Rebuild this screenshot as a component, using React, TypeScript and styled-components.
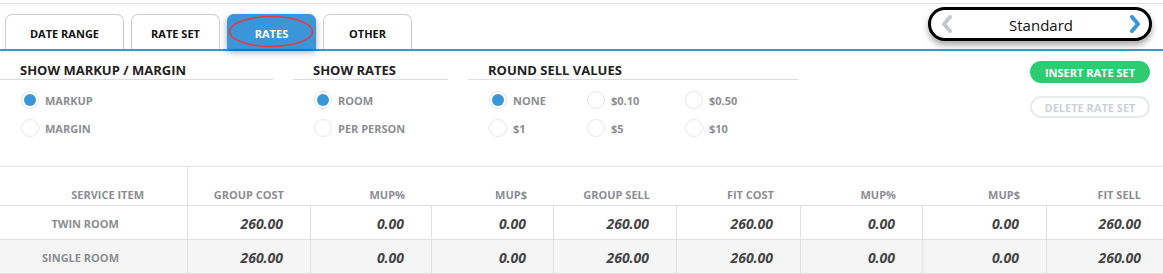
import React from "react";
import styled, { createGlobalStyle } from "styled-components";

const Global = createGlobalStyle`
  html, body { margin: 0; padding: 0; background: #fff; }
  body { font-family: "Open Sans", "Liberation Sans", sans-serif; width: 1163px; overflow: hidden; }
  * { box-sizing: border-box; }
`;

const Page = styled.div`
  width: 1163px;
  padding-top: 3px;
`;

const TopRule = styled.div`
  height: 1px;
  background: #dedee8;
`;

const TabBar = styled.div`
  height: 47px;
  display: flex;
  align-items: flex-end;
  border-bottom: 2px solid #3a96d8;
  padding-left: 5px;
  gap: 7px;
`;

const Tab = styled.div<{ $active?: boolean; $w: number }>`
  position: relative;
  width: ${(p) => p.$w}px;
  height: 35px;
  border: 1px solid ${(p) => (p.$active ? "#3a96d8" : "#cdd0d3")};
  border-bottom: none;
  border-radius: 7px 7px 0 0;
  background: ${(p) => (p.$active ? "#3a96d8" : "#fff")};
  color: ${(p) => (p.$active ? "#fff" : "#111")};
  box-shadow: ${(p) => (p.$active ? "0 3px 7px rgba(0,0,0,0.35)" : "none")};
  z-index: ${(p) => (p.$active ? 1 : 0)};
  font-weight: 700;
  font-size: 11px;
  display: flex;
  align-items: center;
  justify-content: center;
  padding-top: 2px;
`;

const Ellipse = styled.svg`
  position: absolute;
  left: 0px;
  top: 0px;
  pointer-events: none;
`;

const Pill = styled.div`
  margin-left: auto;
  margin-right: 11px;
  align-self: flex-start;
  margin-top: 3px;
  width: 224px;
  height: 34px;
  border: 3px solid #000;
  border-radius: 17px;
  box-shadow: 0 4px 6px rgba(0, 0, 0, 0.35);
  display: flex;
  align-items: center;
  justify-content: space-between;
  padding: 0 7px 0 9px;
  background: #fff;
`;

const PillText = styled.span`
  font-size: 15px;
  color: #111;
  font-weight: 400;
  padding-top: 1px;
`;

const Options = styled.div`
  height: 115px;
  display: flex;
  gap: 20px;
  padding-top: 10px;
  position: relative;
`;

const Section = styled.div<{ $w: number }>`
  width: ${(p) => p.$w}px;
`;

const SectionTitle = styled.div`
  font-size: 13px;
  font-weight: 700;
  color: #222;
  padding-left: 20px;
  height: 18px;
  line-height: 18px;
  border-bottom: 1px solid #dcdce6;
  box-sizing: content-box;
`;

const RadioGrid = styled.div<{ $cols: number }>`
  display: grid;
  grid-template-columns: repeat(${(p) => p.$cols}, 98px);
  row-gap: 10px;
  padding-left: 21px;
  padding-top: 11px;
`;

const RadioItem = styled.div`
  display: flex;
  align-items: center;
  height: 18px;
  gap: 6px;
`;

const Circle = styled.span<{ $on?: boolean }>`
  width: 18px;
  height: 18px;
  border-radius: 50%;
  border: 1px solid #e6e6e6;
  background: #fff;
  display: flex;
  align-items: center;
  justify-content: center;
  flex-shrink: 0;
  &::after {
    content: "";
    width: 12px;
    height: 12px;
    border-radius: 50%;
    background: ${(p) => (p.$on ? "#3a96d8" : "transparent")};
  }
`;

const RadioLabel = styled.span`
  font-size: 11px;
  font-weight: 700;
  color: #8b8e92;
  white-space: nowrap;
  padding-top: 1px;
`;

const Buttons = styled.div`
  margin-left: auto;
  margin-right: 13px;
  display: flex;
  flex-direction: column;
  gap: 13px;
`;

const Button = styled.div<{ $primary?: boolean }>`
  width: 120px;
  height: 22px;
  border-radius: 11px;
  display: flex;
  align-items: center;
  justify-content: center;
  font-size: 11px;
  font-weight: 700;
  background: ${(p) => (p.$primary ? "#2ecc71" : "#fff")};
  color: ${(p) => (p.$primary ? "#fff" : "#ccd0d6")};
  border: ${(p) => (p.$primary ? "none" : "2px solid #e8ebec")};
`;

const Table = styled.div`
  border-top: 1px solid #e0e0e0;
  display: grid;
  grid-template-columns: 188px 123px 121px 122px 123px 124px 122px 124px 1fr;
`;

const HeadCell = styled.div<{ $first?: boolean; $last?: boolean }>`
  height: 39px;
  border-bottom: 1px solid #e0e0e0;
  border-right: ${(p) => (p.$first ? "1px solid #e0e0e0" : "none")};
  display: flex;
  align-items: flex-end;
  justify-content: flex-end;
  padding-bottom: 0px;
  padding-right: ${(p) => (p.$first ? 43 : p.$last ? 22 : 27)}px;
  font-size: 11px;
  font-weight: 700;
  color: #8b8e92;
  white-space: nowrap;
  line-height: 20px;
`;

const Cell = styled.div<{ $alt?: boolean; $first?: boolean; $last?: boolean }>`
  height: 34px;
  border-bottom: 1px solid #e0e0e0;
  border-right: ${(p) => (p.$last ? "none" : "1px solid #e0e0e0")};
  background: ${(p) => (p.$alt ? "#f5f5f5" : "#fff")};
  display: flex;
  align-items: center;
  justify-content: flex-end;
  padding-right: ${(p) => (p.$first ? 68 : p.$last ? 22 : 27)}px;
  padding-top: 1px;
  white-space: nowrap;
  font-weight: 700;
  font-size: ${(p) => (p.$first ? "11px" : "14px")};
  font-style: ${(p) => (p.$first ? "normal" : "italic")};
  color: ${(p) => (p.$first ? "#8b8e92" : "#444")};
`;

const Chevron = ({ dir, color }: { dir: "l" | "r"; color: string }) => (
  <svg width="14" height="18" viewBox="0 0 14 18">
    <polyline
      points={dir === "l" ? "10,2 4,9 10,16" : "4,2 10,9 4,16"}
      fill="none"
      stroke={color}
      strokeWidth="4"
      strokeLinecap="round"
      strokeLinejoin="round"
    />
  </svg>
);

const headers = ["SERVICE ITEM", "GROUP COST", "MUP%", "MUP$", "GROUP SELL", "FIT COST", "MUP%", "MUP$", "FIT SELL"];
const rows = [
  ["TWIN ROOM", "260.00", "0.00", "0.00", "260.00", "260.00", "0.00", "0.00", "260.00"],
  ["SINGLE ROOM", "260.00", "0.00", "0.00", "260.00", "260.00", "0.00", "0.00", "260.00"],
];

export default function App() {
  return (
    <Page>
      <Global />
      <TopRule />
      <TabBar>
        <Tab $w={119}>DATE RANGE</Tab>
        <Tab $w={89}>RATE SET</Tab>
        <Tab $w={89} $active>
          RATES
          <Ellipse width="89" height="36" viewBox="0 0 89 36">
            <ellipse cx="43" cy="16.5" rx="41.5" ry="15" fill="none" stroke="#e8393f" strokeWidth="1.6" />
          </Ellipse>
        </Tab>
        <Tab $w={89}>OTHER</Tab>
        <Pill>
          <Chevron dir="l" color="#c4c8cb" />
          <PillText>Standard</PillText>
          <Chevron dir="r" color="#3a96d8" />
        </Pill>
      </TabBar>
      <Options>
        <Section $w={273}>
          <SectionTitle>SHOW MARKUP / MARGIN</SectionTitle>
          <RadioGrid $cols={1}>
            <RadioItem><Circle $on /><RadioLabel>MARKUP</RadioLabel></RadioItem>
            <RadioItem><Circle /><RadioLabel>MARGIN</RadioLabel></RadioItem>
          </RadioGrid>
        </Section>
        <Section $w={155}>
          <SectionTitle>SHOW RATES</SectionTitle>
          <RadioGrid $cols={1}>
            <RadioItem><Circle $on /><RadioLabel>ROOM</RadioLabel></RadioItem>
            <RadioItem><Circle /><RadioLabel>PER PERSON</RadioLabel></RadioItem>
          </RadioGrid>
        </Section>
        <Section $w={330}>
          <SectionTitle>ROUND SELL VALUES</SectionTitle>
          <RadioGrid $cols={3}>
            <RadioItem><Circle $on /><RadioLabel>NONE</RadioLabel></RadioItem>
            <RadioItem><Circle /><RadioLabel>$0.10</RadioLabel></RadioItem>
            <RadioItem><Circle /><RadioLabel>$0.50</RadioLabel></RadioItem>
            <RadioItem><Circle /><RadioLabel>$1</RadioLabel></RadioItem>
            <RadioItem><Circle /><RadioLabel>$5</RadioLabel></RadioItem>
            <RadioItem><Circle /><RadioLabel>$10</RadioLabel></RadioItem>
          </RadioGrid>
        </Section>
        <Buttons>
          <Button $primary>INSERT RATE SET</Button>
          <Button>DELETE RATE SET</Button>
        </Buttons>
      </Options>
      <Table>
        {headers.map((h, i) => (
          <HeadCell key={"h" + i} $first={i === 0} $last={i === headers.length - 1}>
            {h}
          </HeadCell>
        ))}
        {rows.map((r, ri) =>
          r.map((c, ci) => (
            <Cell key={ri + "-" + ci} $alt={ri === 1} $first={ci === 0} $last={ci === r.length - 1}>
              {c}
            </Cell>
          ))
        )}
      </Table>
    </Page>
  );
}
